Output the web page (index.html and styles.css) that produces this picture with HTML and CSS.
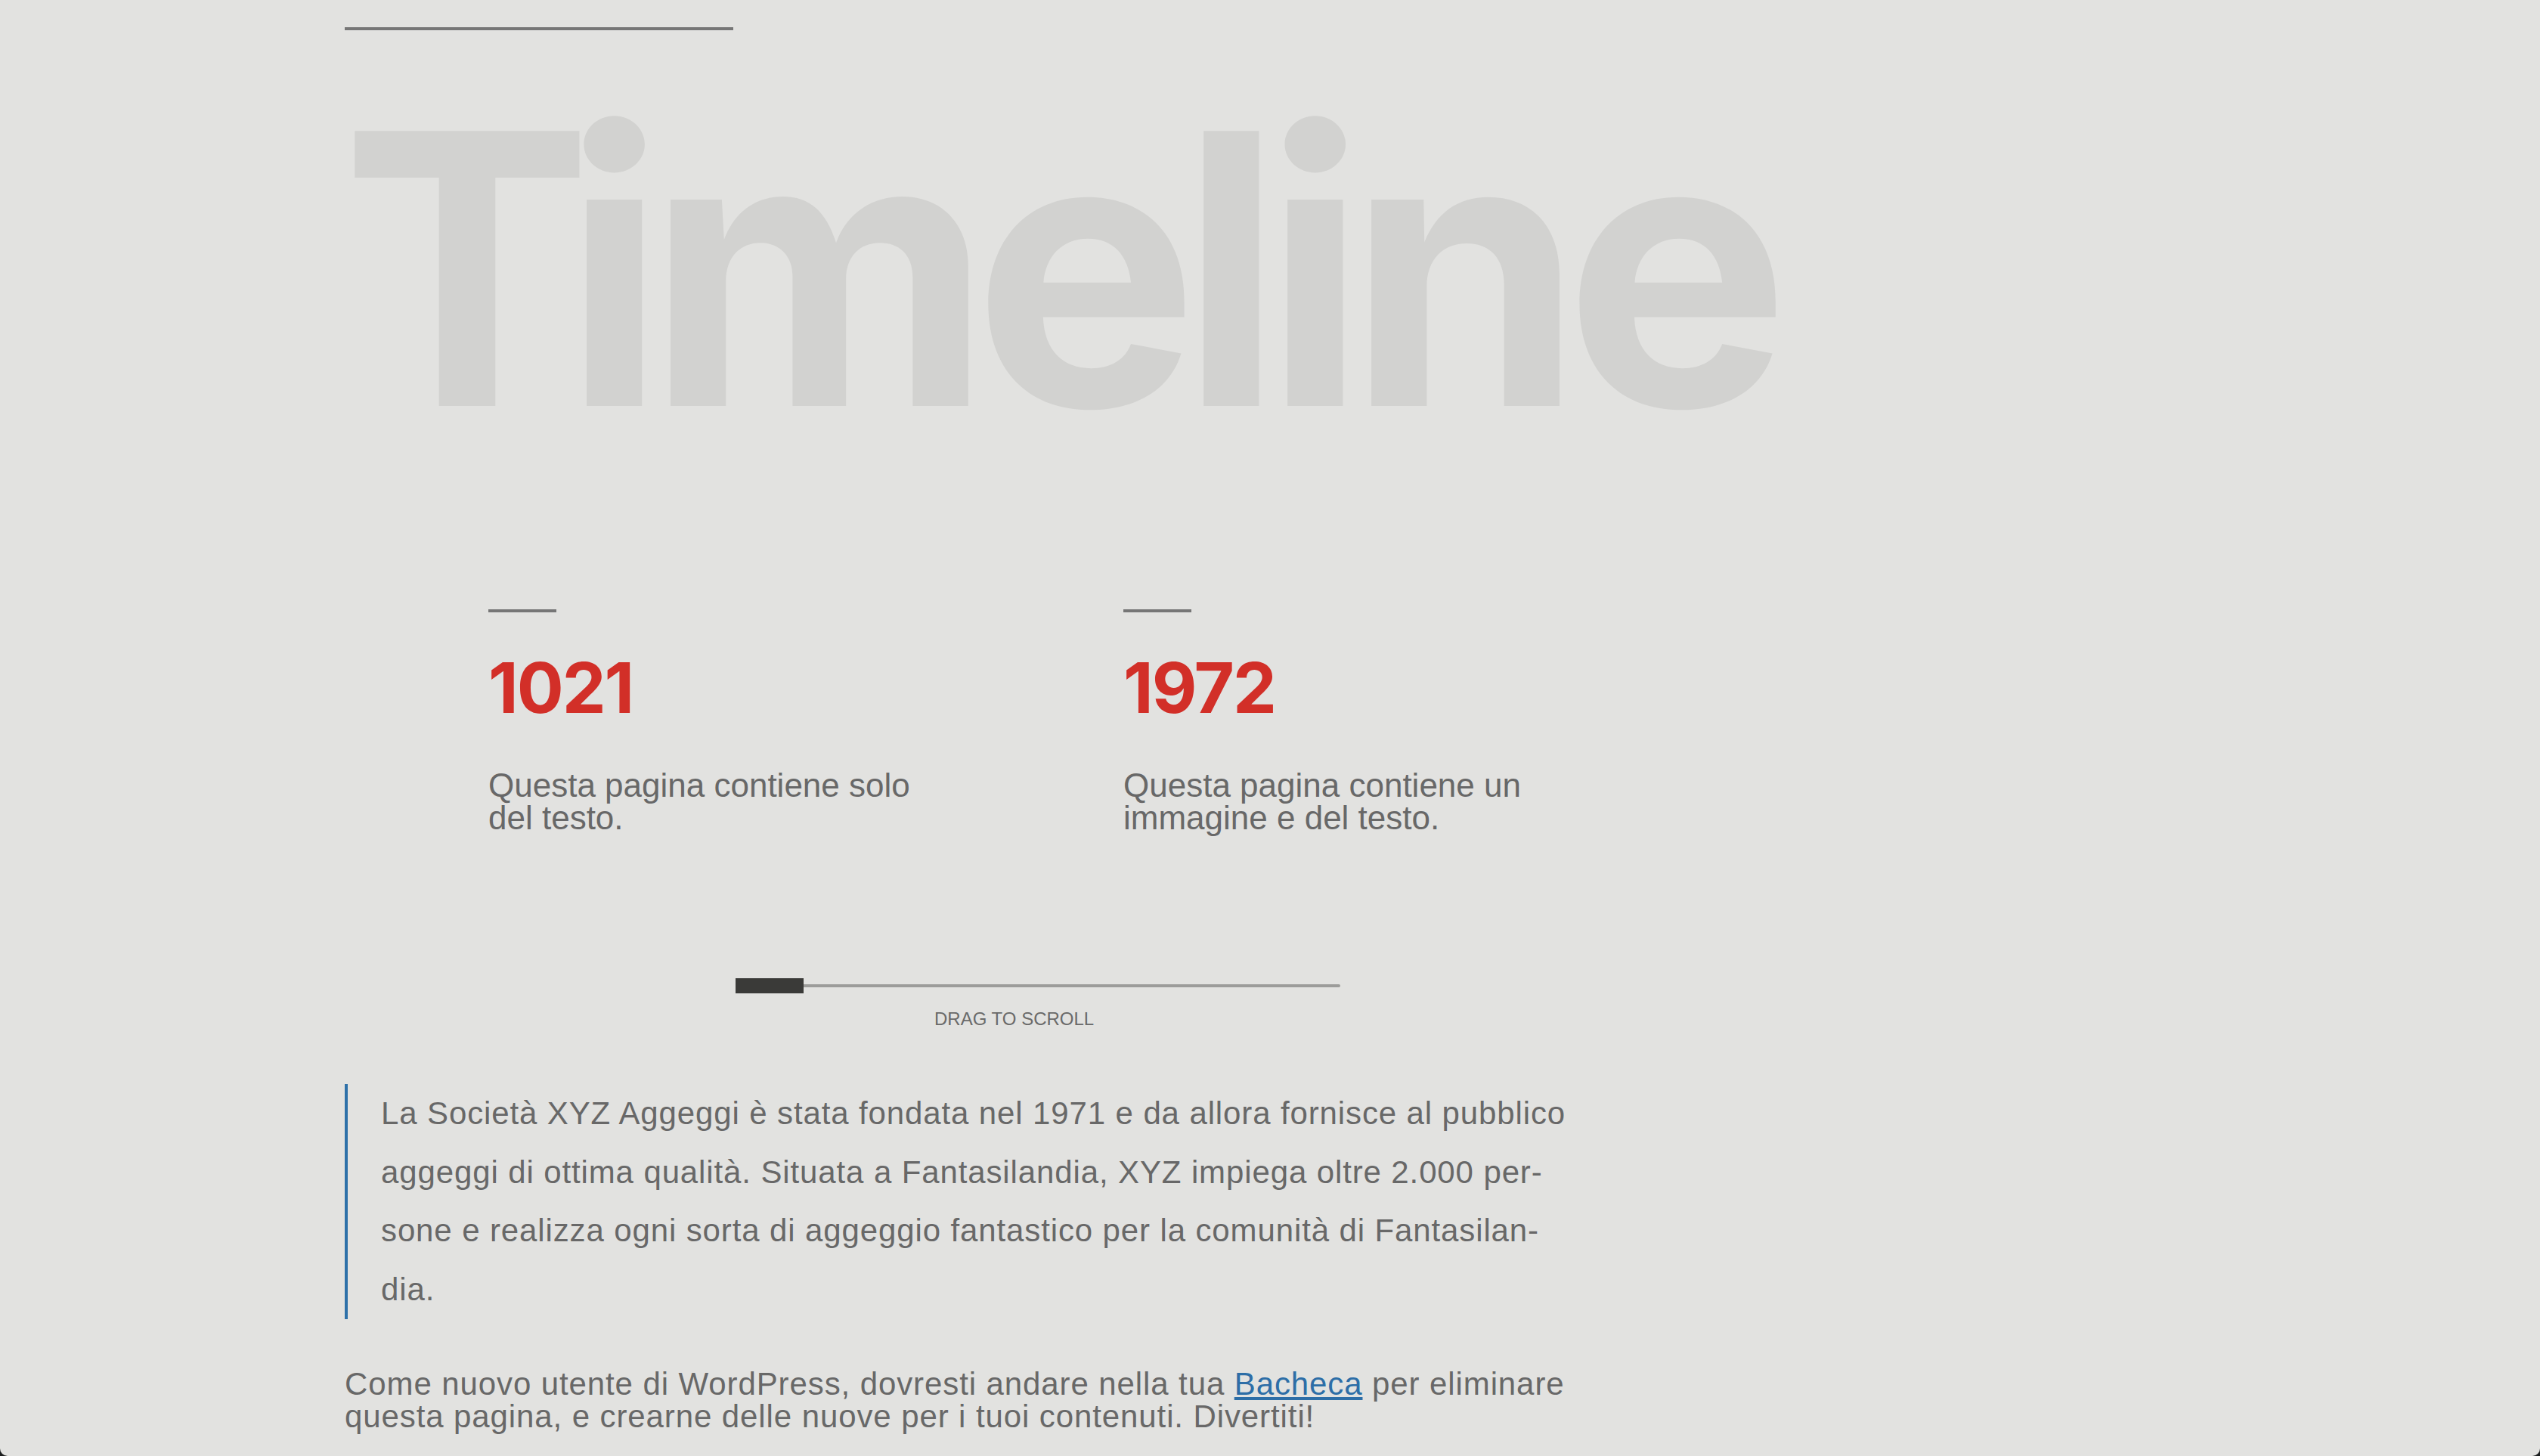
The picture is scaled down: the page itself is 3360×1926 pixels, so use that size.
FILE: index.html
```html
<!DOCTYPE html>
<html lang="it">
<head>
<meta charset="utf-8">
<title>Timeline</title>
<link rel="stylesheet" href="styles.css">
</head>
<body>
<main class="page">
  <div class="content">
    <hr class="rule">
    <h1 class="title"><span class="kern-t">T</span>imeline</h1>
    <section class="timeline">
      <div class="items">
        <article class="item">
          <span class="item-rule"></span>
          <h2 class="year">1021</h2>
          <p class="desc">Questa pagina contiene solo del testo.</p>
        </article>
        <article class="item">
          <span class="item-rule"></span>
          <h2 class="year">1972</h2>
          <p class="desc">Questa pagina contiene un immagine e del testo.</p>
        </article>
      </div>
      <div class="scroller">
        <div class="bar"><span class="thumb"></span><span class="rail"></span></div>
        <div class="hint">DRAG TO SCROLL</div>
      </div>
    </section>
    <blockquote class="quote">
      <p>La Società XYZ Aggeggi è stata fondata nel 1971 e da allora fornisce al pubblico<br>aggeggi di ottima qualità. Situata a Fantasilandia, XYZ impiega oltre 2.000 per-<br>sone e realizza ogni sorta di aggeggio fantastico per la comunità di Fantasilan-<br>dia.</p>
    </blockquote>
    <p class="outro">Come nuovo utente di WordPress, dovresti andare nella tua <a href="#">Bacheca</a> per eliminare<br>questa pagina, e crearne delle nuove per i tuoi contenuti. Divertiti!</p>
  </div>
</main>
</body>
</html>
```

FILE: styles.css
```css
html {
  background: #1c1f1f;
}
body {
  margin: 0;
  font-family: "Liberation Sans", Arial, sans-serif;
  color: #686868;
}
.page {
  min-height: 1926px;
  background: #e2e2e0;
  border-radius: 0 0 10px 10px;
  overflow: hidden;
}
.content {
  padding: 36px 0 0 456px;
}
.rule {
  margin: 0;
  border: 0;
  width: 514px;
  height: 4px;
  background: #767676;
}
.title {
  margin: 66px 0 0 -5px;
  font-family: Inter, "Liberation Sans", sans-serif;
  font-weight: 700;
  font-size: 500px;
  line-height: 500px;
  height: 500px;
  letter-spacing: -0.049em;
  color: #d2d2d0;
}
.kern-t {
  letter-spacing: -0.08em;
}
.timeline {
  margin-top: 200px;
}
.items {
  display: flex;
  padding-left: 190px;
  gap: 250px;
}
.item {
  width: 590px;
  display: flex;
  flex-direction: column;
}
.item-rule {
  display: block;
  width: 90px;
  height: 4px;
  background: #767676;
}
.year {
  margin: 54px 0 0;
  font-family: Inter, "Liberation Sans", sans-serif;
  font-weight: 700;
  font-size: 92px;
  line-height: 92px;
  letter-spacing: -0.022em;
  color: #d22f28;
}
.desc {
  margin: 61px 0 0;
  font-size: 44px;
  line-height: 43px;
}
.scroller {
  margin-top: 191px;
}
.bar {
  display: flex;
  align-items: center;
  margin-left: 517px;
  width: 800px;
  height: 20px;
}
.thumb {
  width: 90px;
  height: 20px;
  background: #3a3a38;
}
.rail {
  flex: 1;
  height: 4px;
  background: #9c9c9a;
  border-radius: 0 2px 2px 0;
}
.hint {
  margin: 22px 0 0 780px;
  font-size: 24px;
  line-height: 24px;
  color: #6a6a6a;
}
.quote {
  margin: 74px 0 0;
  padding-left: 44px;
  border-left: 4px solid #2e71a9;
  width: 1800px;
}
.quote p {
  margin: 0;
  font-size: 42px;
  line-height: 77.7px;
  letter-spacing: 0.88px;
}
.outro {
  margin: 64px 0 0;
  font-size: 42px;
  line-height: 43px;
  letter-spacing: 0.9px;
}
.outro a {
  color: #2d6ea7;
}
```
